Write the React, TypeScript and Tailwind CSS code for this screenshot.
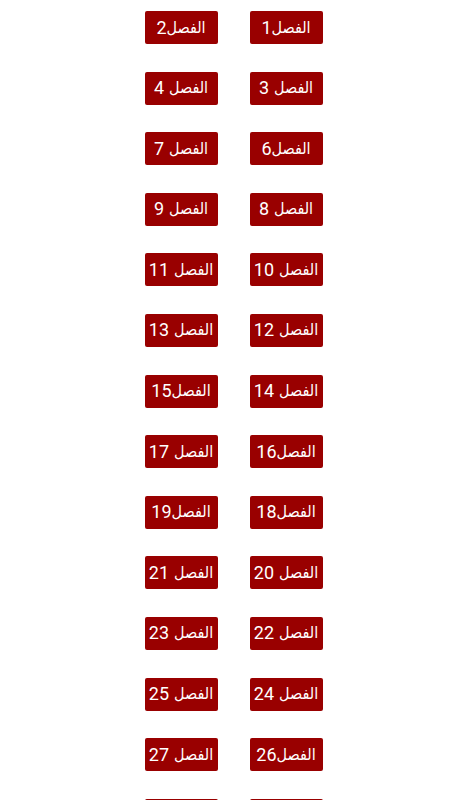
import React from 'react'

// [number, has space between word and number]
const chapters: [number, boolean][] = [
  [1, false], [2, false],
  [3, true], [4, true],
  [6, false], [7, true],
  [8, true], [9, true],
  [10, true], [11, true],
  [12, true], [13, true],
  [14, true], [15, false],
  [16, false], [17, true],
  [18, false], [19, false],
  [20, true], [21, true],
  [22, true], [23, true],
  [24, true], [25, true],
  [26, false], [27, true],
  [28, true], [29, true],
]

export default function App() {
  return (
    <div className="h-[800px] w-[467px] overflow-hidden bg-white">
      <div
        dir="rtl"
        className="grid grid-cols-[73px_73px] justify-center gap-x-[32px] gap-y-[27.6px] pt-[11px]"
      >
        {chapters.map(([n, spaced], i) => (
          <button
            key={i}
            className="flex h-[33px] w-[73px] items-center justify-center rounded-[2px] bg-[#990000] text-white"
          >
            <span
              className="text-[16px] leading-none"
              style={{ fontFamily: '"DejaVu Sans Condensed", "DejaVu Sans", sans-serif' }}
            >
              الفصل
            </span>
            <span
              dir="ltr"
              className={`text-[18px] leading-none ${spaced ? 'mr-[5px]' : ''}`}
              style={{ fontFamily: 'Roboto, sans-serif' }}
            >
              {n}
            </span>
          </button>
        ))}
      </div>
    </div>
  )
}
